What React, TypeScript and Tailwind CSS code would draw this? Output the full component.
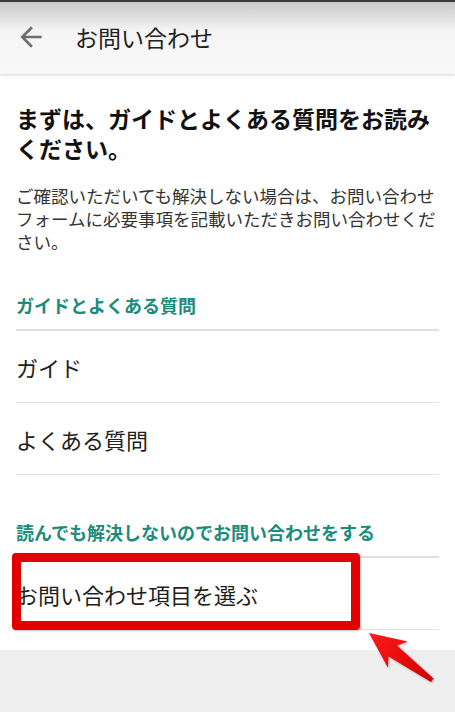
const teal = "text-[#1b8b7b]";

const Row = ({ label, children }: { label: string; children?: React.ReactNode }) => (
  <div className="relative h-[72px] flex items-center border-b border-[#e2e2e2]">
    <span className="text-[22px] leading-[28px] text-[#1e1e1e]">{label}</span>
    {children}
  </div>
);

const SectionTitle = ({ title, className = "" }: { title: string; className?: string }) => (
  <div className={`pb-[12px] border-b-2 border-[#dedede] ${className}`}>
    <h3 className={`text-[18px] leading-[24px] font-bold ${teal}`}>{title}</h3>
  </div>
);

export default function App() {
  return (
    <div
      className="relative w-[455px] min-h-[712px] bg-[#eeeeee]"
      style={{ fontFamily: '"Noto Sans CJK JP", "Noto Sans", sans-serif' }}
    >
      {/* App bar */}
      <header className="relative z-10 h-[74px] border-t-2 border-[#3a3a3a] bg-gradient-to-b from-[#c8c8c8] via-[#f5f5f5] via-40% to-[#f8f8f8] shadow-[0_1px_3px_rgba(0,0,0,0.18)] flex items-center">
        <svg viewBox="0 0 24 24" className="w-[32px] h-[32px] ml-[15px] -mt-[2px] fill-[#6e6e6e]">
          <path d="M20 11H7.83l5.59-5.59L12 4l-8 8 8 8 1.41-1.41L7.83 13H20v-2z" />
        </svg>
        <h1 className="ml-[28px] -mt-[2px] text-[23px] leading-[30px] text-[#222]">お問い合わせ</h1>
      </header>

      {/* Content */}
      <main className="bg-white px-4 pb-[20px]">
        <h2 className="pt-[29px] text-[23px] leading-[30px] font-bold text-[#111] whitespace-nowrap">
          まずは、ガイドとよくある質問をお読み
          <br />
          ください。
        </h2>
        <p className="mt-[21px] text-[17.5px] leading-[23px] text-[#333] whitespace-nowrap">
          ご確認いただいても解決しない場合は、お問い合わせ
          <br />
          フォームに必要事項を記載いただきお問い合わせくだ
          <br />
          さい。
        </p>

        <SectionTitle title="ガイドとよくある質問" className="mt-[40px]" />
        <Row label="ガイド" />
        <Row label="よくある質問" />

        <SectionTitle title="読んでも解決しないのでお問い合わせをする" className="pt-[45px]" />
        <div className="relative">
          <Row label="お問い合わせ項目を選ぶ" />
          {/* red highlight box */}
          <div className="absolute left-[-4px] top-[-5px] w-[348px] h-[77px] border-[9px] border-[#e20000] rounded-[4px] shadow-[1px_1px_2px_rgba(0,0,0,0.25)]" />
        </div>
      </main>

      {/* red pointer arrow */}
      <svg
        className="absolute left-[360px] top-[625px] w-[80px] h-[62px] drop-shadow-[1px_1px_1px_rgba(0,0,0,0.3)]"
        viewBox="0 0 80 62"
      >
        <defs>
          <linearGradient id="arw" x1="0" y1="0" x2="1" y2="1">
            <stop offset="0" stopColor="#ff1a1a" />
            <stop offset="1" stopColor="#d00000" />
          </linearGradient>
        </defs>
        <polygon
          fill="url(#arw)"
          points="9,8 47.7,16.4 37,20.5 73.5,53.5 71,57 28.5,31.5 27.9,42.8"
        />
      </svg>
    </div>
  );
}
